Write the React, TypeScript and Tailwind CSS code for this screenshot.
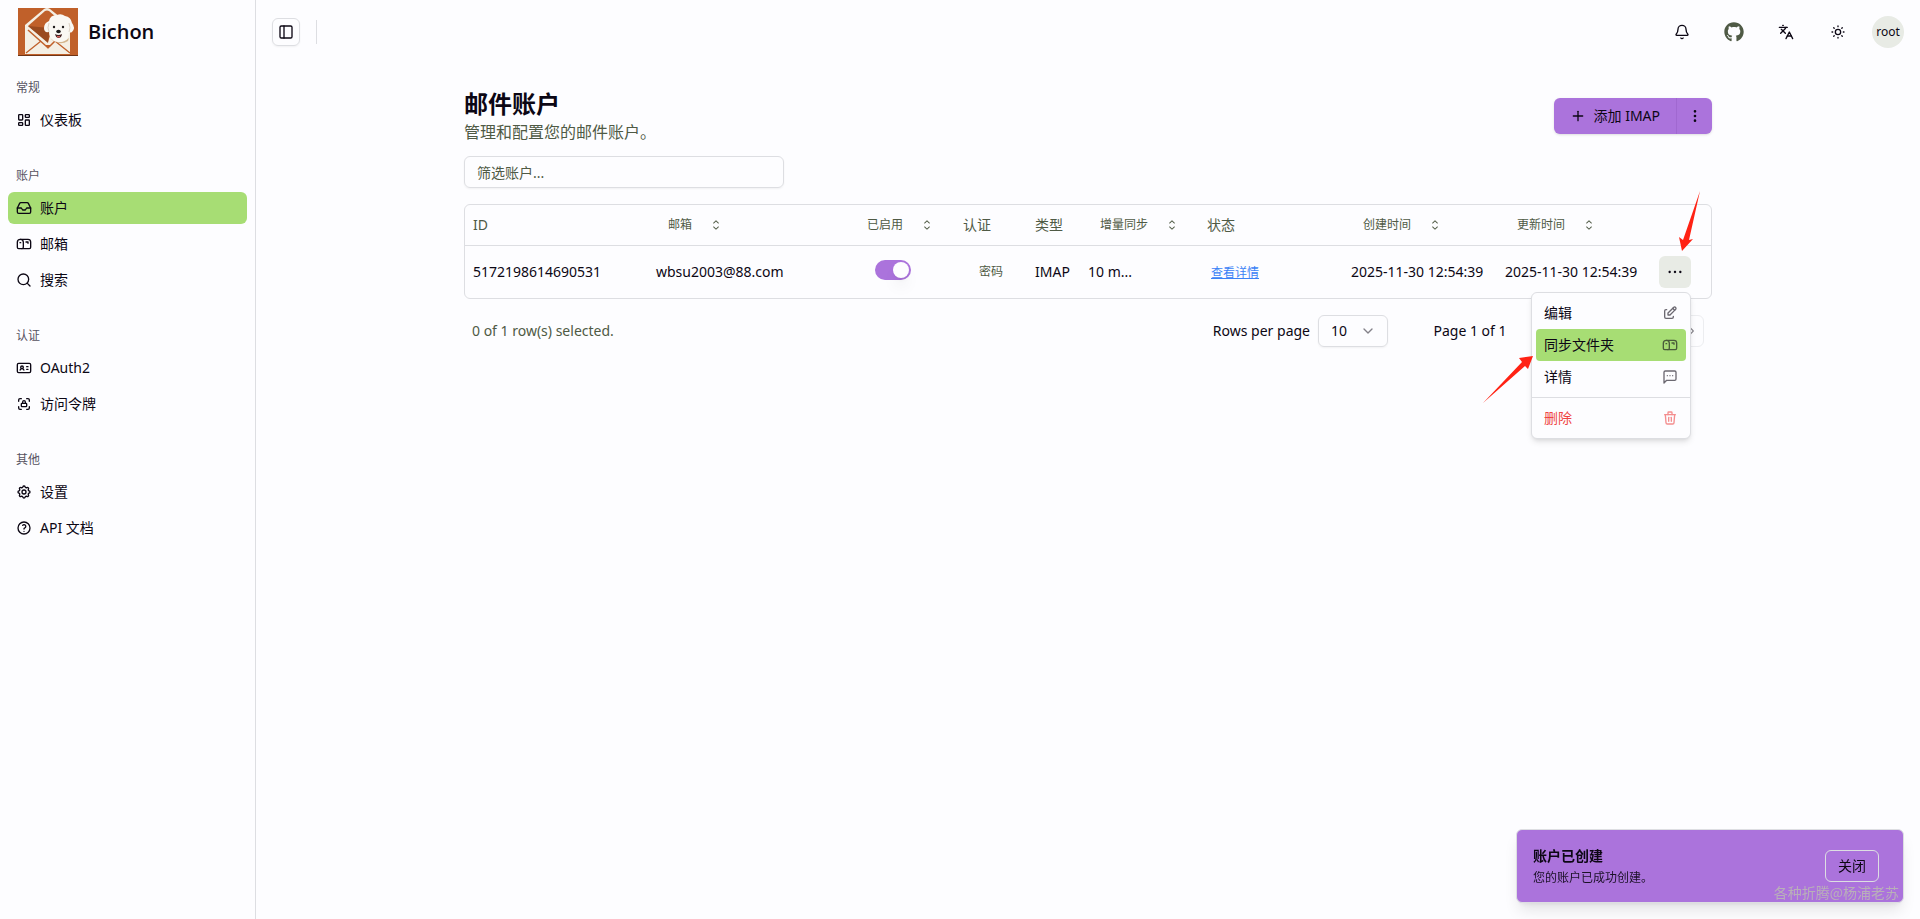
import { useState } from "react";
import type { ComponentType, ReactNode } from "react";
import {
  Bell,
  ChevronDown,
  ChevronRight,
  ChevronLeft,
  IdCard,
  Inbox,
  Languages,
  Mailbox,
  PanelLeft,
  Plus,
  Search,
} from "lucide-react";
import {
  TbEdit,
  TbHelp,
  TbLayoutDashboard,
  TbLockAccess,
  TbSettings,
  TbSun,
  TbTrash,
} from "react-icons/tb";
import {
  RxCaretSort,
  RxDotsHorizontal,
  RxDoubleArrowLeft,
  RxDoubleArrowRight,
} from "react-icons/rx";
import { FaGithub } from "react-icons/fa";
import { LuEllipsisVertical } from "react-icons/lu";

type IconType = ComponentType<{ className?: string }>;

const navGroups: { title: string; items: { label: string; icon: IconType; active?: boolean }[] }[] = [
  {
    title: "常规",
    items: [{ label: "仪表板", icon: TbLayoutDashboard }],
  },
  {
    title: "账户",
    items: [
      { label: "账户", icon: Inbox, active: true },
      { label: "邮箱", icon: Mailbox },
      { label: "搜索", icon: Search },
    ],
  },
  {
    title: "认证",
    items: [
      { label: "OAuth2", icon: IdCard },
      { label: "访问令牌", icon: TbLockAccess },
    ],
  },
  {
    title: "其他",
    items: [
      { label: "设置", icon: TbSettings },
      { label: "API 文档", icon: TbHelp },
    ],
  },
];

function Logo() {
  return (
    <svg viewBox="0 0 60 48" className="h-12 w-[60px] shrink-0" role="img" aria-label="Bichon">
      <rect width="60" height="48" fill="#c0602a" />
      {/* envelope */}
      <path d="M7 17 L26 1 Q29 -1 32 1 L52 17 V46 H7Z" fill="#f4efe4" />
      <path d="M10 18 L27 3 Q29 2 31 3 L38 9 L30 34Z" fill="#c0602a" />
      <path d="M10 18 L32 20 L30 35Z" fill="#9a4a1f" />
      <path d="M7 20 L28 37 Q30 39 32 37 L52 20 V46 H7Z" fill="#f4efe4" />
      <path d="M8 45 L23 33 M52 45 L37 33" stroke="#c0602a" strokeWidth="1.3" fill="none" />
      <path d="M10 22 L28 38 Q30 40 32 38 L38 32" stroke="#c0602a" strokeWidth="1.5" fill="none" />
      <path d="M27 37 L33 37 L30 41Z" fill="#c0602a" />
      <path d="M33 30 Q42 38 51 30 L50 33 Q42 38 34 32Z" fill="#d3b58d" />
      {/* dog */}
      <path
        d="M31 13 Q32 7 39 7 Q43 5 47 8 Q53 9 54 15 Q58 20 54 24 Q52 25 51 24 Q51 31 46 33 Q41 35 36 33 Q31 30 31 24 Q26 25 26 20 Q26 15 31 13Z"
        fill="#faf8f3"
      />
      <path d="M31 15 Q29 20 31 24 M51 15 Q53 20 51 24" stroke="#ddd3c5" strokeWidth="1" fill="none" />
      <circle cx="36" cy="19" r="1.2" fill="#1d1a1a" />
      <circle cx="45" cy="19" r="1.2" fill="#1d1a1a" />
      <ellipse cx="40.5" cy="23.5" rx="2.3" ry="1.8" fill="#1d1a1a" />
      <path d="M37 26 Q40.5 28 44 26 Q43.5 30 40.5 30 Q38 30 37 26Z" fill="#442222" />
      <path d="M39 28 H42 V29.5 H39Z" fill="#d9605a" />
      <rect y="47" width="60" height="1" fill="#6f3517" />
    </svg>
  );
}

function MessageIcon({ className }: { className?: string }) {
  return (
    <svg
      viewBox="0 0 24 24"
      fill="none"
      stroke="currentColor"
      strokeWidth="2"
      strokeLinecap="round"
      strokeLinejoin="round"
      className={className}
    >
      <path d="M21 15a2 2 0 0 1-2 2H7l-4 4V5a2 2 0 0 1 2-2h14a2 2 0 0 1 2 2z" />
      <path d="M8 10h.01M12 10h.01M16 10h.01" />
    </svg>
  );
}

function Sidebar() {
  return (
    <aside className="w-64 shrink-0 border-r border-[#dddee2]">
      <div className="flex h-16 items-center gap-2.5 pl-[18px]">
        <Logo />
        <span className="font-['Open_Sans',sans-serif] text-xl font-semibold">Bichon</span>
      </div>
      <nav>
        {navGroups.map((group) => (
          <section key={group.title} className="px-2 pt-2 pb-4">
            <h2 className="flex h-8 items-center px-2 text-xs text-[#56535f]">{group.title}</h2>
            <ul className="flex flex-col gap-1">
              {group.items.map(({ label, icon: Icon, active }) => (
                <li key={label}>
                  <a
                    href="#"
                    className={[
                      "flex h-8 items-center gap-2 rounded-md px-2 text-sm",
                      active ? "bg-[#a7dd74]" : "hover:bg-[#eceee9]",
                    ].join(" ")}
                  >
                    <Icon className="size-4" />
                    {label}
                  </a>
                </li>
              ))}
            </ul>
          </section>
        ))}
      </nav>
    </aside>
  );
}

function TopBar() {
  return (
    <header className="flex h-16 items-center justify-between px-4">
      <div className="flex items-center gap-4">
        <button
          aria-label="Toggle sidebar"
          className="flex size-7 items-center justify-center rounded-md border border-[#dddee2] shadow-xs"
        >
          <PanelLeft className="size-4" />
        </button>
        <div className="h-6 w-px bg-[#dddee2]" />
      </div>
      <div className="flex items-center gap-4">
        <button aria-label="Notifications" className="flex size-9 items-center justify-center">
          <Bell className="size-4" />
        </button>
        <a href="#" aria-label="GitHub" className="flex size-9 items-center justify-center text-[#4f5a45]">
          <FaGithub className="size-5" />
        </a>
        <button aria-label="Language" className="flex size-9 items-center justify-center">
          <Languages className="size-4" />
        </button>
        <button aria-label="Theme" className="flex size-9 items-center justify-center">
          <TbSun className="size-4" />
        </button>
        <button className="flex size-8 items-center justify-center rounded-full bg-[#e8ebe5] text-xs">
          root
        </button>
      </div>
    </header>
  );
}

function SortButton({ children }: { children: ReactNode }) {
  return (
    <button className="flex h-8 items-center gap-4 px-3 text-xs">
      {children}
      <RxCaretSort className="size-4" />
    </button>
  );
}

function AccountsTable() {
  const [enabled, setEnabled] = useState(true);

  return (
    <div className="rounded-md border border-[#dddee2]">
      <table className="w-full table-fixed text-left text-sm whitespace-nowrap">
        <colgroup>
          <col className="w-[183px]" />
          <col className="w-[199px]" />
          <col className="w-[108px]" />
          <col className="w-[72px]" />
          <col className="w-[53px]" />
          <col className="w-[119px]" />
          <col />
          <col className="w-[154px]" />
          <col className="w-[154px]" />
          <col className="w-[60px]" />
        </colgroup>
        <thead className="text-[#4f5a45]">
          <tr className="h-10 border-b border-[#dddee2]">
            <th className="px-2 font-normal">ID</th>
            <th className="px-2 font-normal">
              <SortButton>邮箱</SortButton>
            </th>
            <th className="px-2 font-normal">
              <SortButton>已启用</SortButton>
            </th>
            <th className="px-2 font-normal">认证</th>
            <th className="px-2 font-normal">类型</th>
            <th className="px-2 font-normal">
              <SortButton>增量同步</SortButton>
            </th>
            <th className="px-2 font-normal">状态</th>
            <th className="px-2 font-normal">
              <SortButton>创建时间</SortButton>
            </th>
            <th className="px-2 font-normal">
              <SortButton>更新时间</SortButton>
            </th>
            <th aria-label="操作" />
          </tr>
        </thead>
        <tbody>
          <tr className="h-[53px]">
            <td className="px-2">5172198614690531</td>
            <td className="px-2">wbsu2003@88.com</td>
            <td className="px-2 pl-7">
              <label className="mb-1 flex h-5 w-9 items-center rounded-full bg-[#ab73dc] has-checked:justify-end">
                <input
                  type="checkbox"
                  aria-label="已启用"
                  className="sr-only"
                  checked={enabled}
                  onChange={(e) => setEnabled(e.target.checked)}
                />
                <span className="mx-0.5 size-4 rounded-full bg-[#fdfdff] shadow-lg" />
              </label>
            </td>
            <td className="px-2 pl-6 text-xs text-[#4f5a45]">密码</td>
            <td className="px-2">IMAP</td>
            <td className="px-2">10 m...</td>
            <td className="px-2 pl-3">
              <a href="#" className="text-xs text-[#3b82f6] underline">
                查看详情
              </a>
            </td>
            <td className="px-2">2025-11-30 12:54:39</td>
            <td className="px-2">2025-11-30 12:54:39</td>
            <td className="relative px-2">
              <button
                aria-label="Open menu"
                className="flex size-8 items-center justify-center rounded-md bg-[#e8ebe5]"
              >
                <RxDotsHorizontal className="size-4" />
              </button>
              <RowMenu />
            </td>
          </tr>
        </tbody>
      </table>
    </div>
  );
}

function RowMenu() {
  const item = "flex h-8 w-full items-center justify-between rounded-sm px-2";
  return (
    <div className="absolute top-full right-5 z-10 -mt-1.5 w-40 rounded-md border border-[#dddee2] bg-[#fdfdff] shadow-md">
      <div className="p-1">
        <button className={item}>
          编辑
          <TbEdit className="size-4 opacity-60" />
        </button>
        <button className={`${item} bg-[#a7dd74]`}>
          同步文件夹
          <Mailbox className="size-4 opacity-60" />
        </button>
        <button className={item}>
          详情
          <MessageIcon className="size-4 opacity-60" />
        </button>
      </div>
      <div className="border-t border-[#dddee2] p-1">
        <button className={`${item} text-[#ef4444]`}>
          删除
          <TbTrash className="size-4 opacity-60" />
        </button>
      </div>
      {/* pointer to the row button */}
      <svg viewBox="0 0 24 60" className="absolute -top-[102px] right-[-12px] h-[60px] w-6" fill="#ff2214">
        <path d="M22 0 L11 49 L15 48 L4 60 L1 46 L5 49Z" />
      </svg>
      {/* pointer to the folder sync item */}
      <svg viewBox="0 0 52 48" className="absolute top-[62px] -left-[50px] h-12 w-[52px]" fill="#ff2214">
        <path d="M1 48 L40 7 L37 3 L51 1 L46 14 L43 11Z" />
      </svg>
    </div>
  );
}

function Pagination() {
  const pager = "flex size-8 items-center justify-center rounded-md border border-[#dddee2] opacity-50";
  return (
    <div className="flex items-center justify-between px-2 text-sm">
      <p className="text-[#4f5a45]">0 of 1 row(s) selected.</p>
      <div className="flex items-center gap-8">
        <div className="flex items-center gap-2">
          <label htmlFor="page-size">Rows per page</label>
          <div className="relative">
            <select
              id="page-size"
              className="h-8 w-[70px] appearance-none rounded-md border border-[#dddee2] pl-3 shadow-xs"
            >
              <option>10</option>
              <option>20</option>
            </select>
            <ChevronDown className="pointer-events-none absolute top-2 right-3 size-4 opacity-50" />
          </div>
        </div>
        <div className="flex items-center">
          <span className="w-[100px] text-center">Page 1 of 1</span>
          <div className="ml-8 flex gap-2">
            <button className={pager} disabled aria-label="First page">
              <RxDoubleArrowLeft className="size-4" />
            </button>
            <button className={pager} disabled aria-label="Previous page">
              <ChevronLeft className="size-4" />
            </button>
            <button className={pager} disabled aria-label="Next page">
              <ChevronRight className="size-4" />
            </button>
            <button className={pager} disabled aria-label="Last page">
              <RxDoubleArrowRight className="size-4" />
            </button>
          </div>
        </div>
      </div>
    </div>
  );
}

function Toast() {
  return (
    <div
      role="status"
      className="fixed right-4 bottom-4 flex w-[388px] items-center justify-between rounded-md border border-[#dddee2] bg-[#ab73dc] p-4 pr-6 shadow-lg"
    >
      <div className="flex flex-col gap-1">
        <p className="text-sm font-semibold">账户已创建</p>
        <p className="text-xs opacity-90">您的账户已成功创建。</p>
      </div>
      <button className="h-8 rounded-md border border-[#dddee2] px-3 text-sm">关闭</button>
      <span className="absolute right-1 bottom-0 font-['Noto_Sans_CJK_SC',sans-serif] text-sm text-[#b9afb9]">
        各种折腾@杨浦老苏
      </span>
    </div>
  );
}

export default function App() {
  return (
    <div className="flex min-h-screen bg-[#fdfdff] font-['Noto_Sans','Noto_Sans_CJK_SC',sans-serif] text-[#0c0714]">
      <Sidebar />
      <div className="min-w-0 flex-1">
        <TopBar />
        <main className="mx-auto max-w-7xl px-4 pt-6">
          <div className="flex items-center justify-between">
            <div>
              <h1 className="text-2xl font-bold">邮件账户</h1>
              <p className="text-[#4f5a45]">管理和配置您的邮件账户。</p>
            </div>
            <div className="flex h-9 overflow-hidden rounded-md bg-[#ab73dc] text-sm shadow-sm">
              <button className="flex items-center gap-2 px-4">
                <Plus className="size-4" />
                添加 IMAP
              </button>
              <button aria-label="More" className="flex w-9 items-center justify-center border-l border-[#a068d0]">
                <LuEllipsisVertical className="size-4" />
              </button>
            </div>
          </div>
          <div className="mt-3 flex flex-col gap-4">
            <input
              aria-label="筛选账户"
              placeholder="筛选账户..."
              className="h-8 w-80 rounded-md border border-[#dddee2] px-3 text-sm shadow-xs placeholder:text-[#4f5a45]"
            />
            <AccountsTable />
            <Pagination />
          </div>
        </main>
      </div>
      <Toast />
    </div>
  );
}
